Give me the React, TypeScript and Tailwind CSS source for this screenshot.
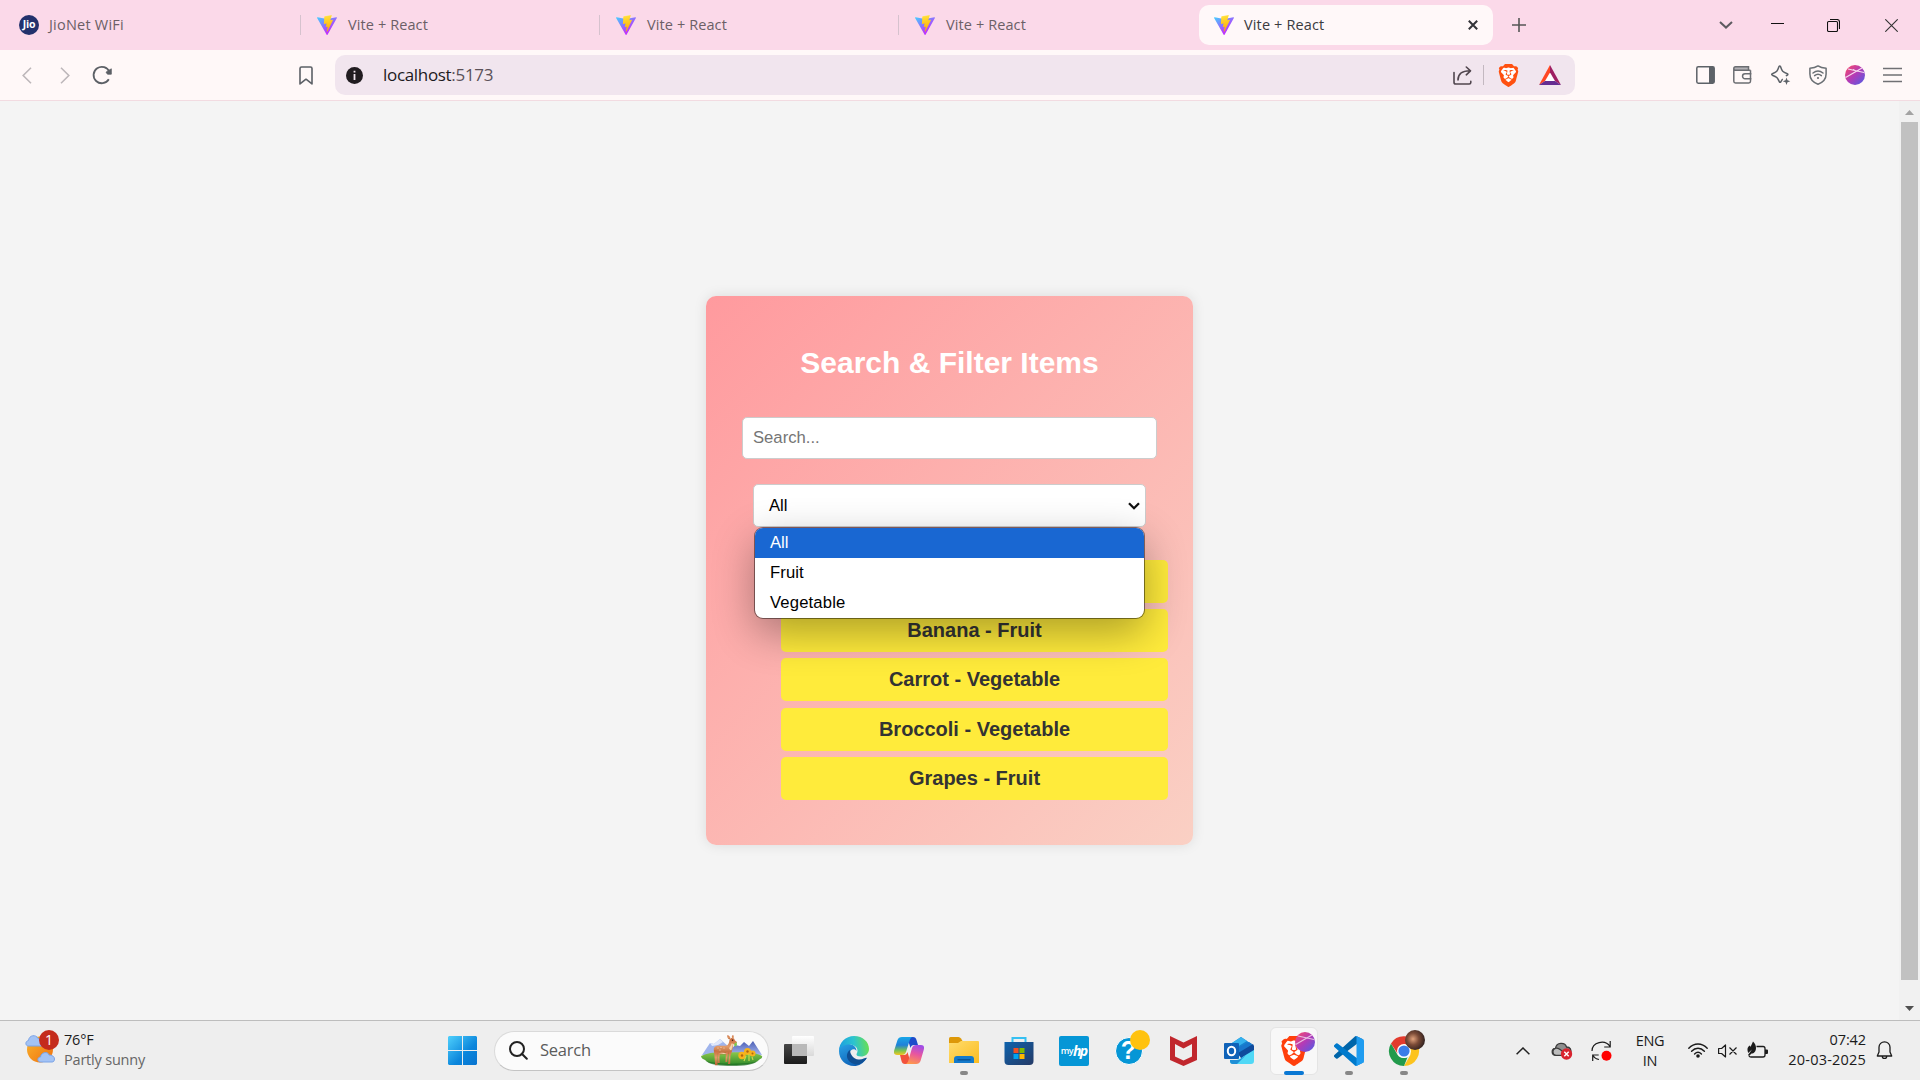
import React from "react";
import { SiBrave } from "react-icons/si";

function ViteLogo() {
  return (
    <svg className="size-5 shrink-0" viewBox="0 0 256 257">
      <defs>
        <linearGradient id="viteA" x1="0" x2=".6" y1="0" y2=".8">
          <stop offset="0" stopColor="#41D1FF" />
          <stop offset="1" stopColor="#BD34FE" />
        </linearGradient>
        <linearGradient id="viteB" x1=".4" x2=".5" y1="0" y2="1">
          <stop offset="0" stopColor="#FFEA83" />
          <stop offset=".1" stopColor="#FFDD35" />
          <stop offset="1" stopColor="#FFA800" />
        </linearGradient>
      </defs>
      <path fill="url(#viteA)" d="M255.153 37.938L134.897 252.976c-2.483 4.44-8.862 4.466-11.382.048L.875 37.958c-2.746-4.814 1.371-10.646 6.827-9.67l120.385 21.517a6.537 6.537 0 0 0 2.322-.004l117.867-21.483c5.438-.991 9.574 4.796 6.877 9.62Z" />
      <path fill="url(#viteB)" d="M185.432.063L96.44 17.501a3.268 3.268 0 0 0-2.634 3.014l-5.474 92.456a3.268 3.268 0 0 0 3.997 3.378l24.777-5.718c2.318-.535 4.413 1.507 3.936 3.838l-7.361 36.047c-.495 2.426 1.782 4.5 4.151 3.78l15.304-4.649c2.372-.72 4.652 1.36 4.15 3.788l-11.698 56.621c-.732 3.542 3.979 5.473 5.943 2.437l1.313-2.028l72.516-144.72c1.215-2.423-.88-5.186-3.54-4.672l-25.505 4.922c-2.396.462-4.435-1.77-3.759-4.114l16.646-57.705c.677-2.35-1.37-4.583-3.769-4.113Z" />
    </svg>
  );
}

function Tab() {
  return (
    <div className="flex h-5 w-[299px] items-center border-l border-[#d6c2ce] pl-4">
      <ViteLogo />
      <span className="ml-[11px] text-[14.5px] tracking-[0.1px] text-[#6b5f66]">Vite + React</span>
    </div>
  );
}

function TabBar() {
  return (
    <div className="flex h-[50px] items-center bg-[#fbd9e9]">
      <div className="flex w-[300px] items-center pl-[19px]">
        <div className="flex size-5 items-center justify-center rounded-full bg-[#22316c] text-[10.5px] font-bold tracking-[-0.3px] text-white">Jio</div>
        <span className="ml-[10px] text-[14.5px] tracking-[0.22px] text-[#6b5f66]">JioNet WiFi</span>
      </div>
      <Tab />
      <Tab />
      <Tab />
      <div className="ml-[2px] flex h-10 w-[294px] items-center rounded-[10px] bg-[#fff8f9] pl-[15px]">
        <ViteLogo />
        <span className="ml-[10px] text-[14.5px] tracking-[0.14px] text-[#3b3b3f]">Vite + React</span>
        <svg className="ml-auto mr-[15px] size-[10px]" viewBox="0 0 10 10" fill="none" stroke="#333338" strokeWidth="2">
          <path d="M.8.8l8.4 8.4M9.2.8L.8 9.2" />
        </svg>
      </div>
      <svg className="ml-[19px] size-[14px]" viewBox="0 0 14 14" fill="none" stroke="#555" strokeWidth="1.6">
        <path d="M7 0v14M0 7h14" />
      </svg>
      <svg className="ml-auto mr-[38px] h-2 w-[14px]" viewBox="0 0 14 8" fill="none" stroke="#5d5a60" strokeWidth="2">
        <path d="M1 1l6 5.6L13 1" />
      </svg>
      <svg className="mr-[43px] h-[14px] w-[13px]" viewBox="0 0 13 14" shapeRendering="crispEdges">
        <path fill="#111" d="M0 5h13v1H0z" />
      </svg>
      <svg className="mr-[45px] size-[13px]" viewBox="0 0 13 13" fill="none" stroke="#111" strokeWidth="1.1">
        <rect x=".5" y="2.5" width="10" height="10" rx="1.2" />
        <path d="M3 .5h7a2.5 2.5 0 0 1 2.5 2.5v7" />
      </svg>
      <svg className="mr-[22px] size-[13px]" viewBox="0 0 13 13" fill="none" stroke="#333" strokeWidth="1.1">
        <path d="M.3.3l12.4 12.4M12.7.3L.3 12.7" />
      </svg>
    </div>
  );
}

function Toolbar() {
  return (
    <div className="flex h-[51px] items-center border-b border-[#f2dbe1] bg-[#fff8f8]">
      <svg className="ml-[22px] h-[17px] w-[10px]" viewBox="0 0 10 17" fill="none" stroke="#bdb7ba" strokeWidth="1.6">
        <path d="M9 .8L1.2 8.5 9 16.2" />
      </svg>
      <svg className="ml-[28px] h-[17px] w-[10px]" viewBox="0 0 10 17" fill="none" stroke="#bdb7ba" strokeWidth="1.6">
        <path d="M1 .8l7.800 7.700L1 16.200" />
      </svg>
      <svg className="ml-[22px] size-5" viewBox="0 0 20 20" fill="none" stroke="#5c6066" strokeWidth="1.8">
        <path d="M16.800 14.300A8.200 8.200 0 1 1 17.400 7" />
        <path d="M19.300 3.800v5.400h-3.800l-1.500-2z" fill="#5c6066" stroke="#5c6066" strokeWidth=".8" strokeLinejoin="round" />
      </svg>
      <svg className="ml-[187px] h-[19px] w-[14px]" viewBox="0 0 14 19" fill="none" stroke="#5c6066" strokeWidth="1.6" strokeLinejoin="round">
        <path d="M1 2.500Q1 1 2.500 1h9Q13 1 13 2.500v15.400l-6-4.700-6 4.700z" />
      </svg>
      <div className="ml-[22px] flex h-10 w-[1240px] items-center rounded-[10px] bg-[#f1e5ee]">
        <svg className="ml-[11px] size-[17px]" viewBox="0 0 17 17">
          <circle cx="8.500" cy="8.500" r="8.500" fill="#211c20" />
          <path fill="#f1e5ee" d="M7.600 3.800h1.800v1.800H7.600zM7.600 7h1.800v6H7.600z" />
        </svg>
        <span className="ml-[20px] text-[17px] tracking-[-0.32px] text-[#1d1a1d]">
          localhost<span className="text-[#5b5158]">:5173</span>
        </span>
        <svg className="ml-auto h-[19px] w-[19px]" viewBox="0 0 19 19" fill="none" stroke="#51464e" strokeWidth="1.600" strokeLinecap="round" strokeLinejoin="round">
          <path d="M1 6.500v9.700Q1 18 2.800 18h13.400q1.600 0 1.600-1.600v-1M5 14C5 8.500 8.500 4.800 17 4.800M13.300 1L17.500 4.800l-4.200 4" />
        </svg>
        <div className="ml-[11px] h-5 w-px bg-[#c3b8c0]" />
        <div className="relative ml-[14px] flex h-[23px] w-5 items-center justify-center">
          <svg className="absolute inset-0 h-[23px] w-5" viewBox="0 0 20 23">
            <path fill="#fff" d="M4 3h12l2 4-2 10-6 5-6-5L2 7z" />
          </svg>
          <SiBrave className="relative size-[23px] shrink-0 text-[#ff5010]" />
        </div>
        <svg className="ml-[21px] mr-[14px] h-5 w-[22px]" viewBox="0 0 22 20">
          <path fill="#fff" d="M11 6l6 11H5z" />
          <path fill="#ff4724" d="M11 0v7.500L6 16 0 20z" />
          <path fill="#9e1f63" d="M11 0l11 20-6-4-5-8.500z" />
          <path fill="#662d91" d="M0 20l6-4h10l6 4z" />
        </svg>
      </div>
      <svg className="ml-[121px] h-[18px] w-[19px]" viewBox="0 0 19 18" fill="none" stroke="#5d6268" strokeWidth="1.500">
        <rect x=".8" y=".8" width="17.400" height="16.400" rx="1.400" />
        <path fill="#5d6268" stroke="none" d="M13 1h5v16h-5z" />
      </svg>
      <svg className="ml-[18px] h-[18px] w-[19px]" viewBox="0 0 19 18" fill="none" stroke="#6b6d72" strokeWidth="1.500">
        <path fill="#b3b1b5" stroke="none" d="M1 1h15v3H1z" />
        <path d="M17.500 4.300H2.500Q.8 4.300.8 2.600V2.500Q.8.800 2.500.8h13v3.500M.8 2.500v12.700q0 1.700 1.700 1.700h13.300q1.700 0 1.700-1.700V4.300M18.500 7.800H12a2.400 2.400 0 0 0 0 4.900h6.500" />
      </svg>
      <svg className="ml-[19px] size-5" viewBox="0 0 20 20" fill="none" stroke="#5d6268" strokeWidth="1.500" strokeLinejoin="round">
        <path d="M11.800 14.200c-1 .5-1.300 1.300-1.900 2.600-.5.700-1.100.7-1.500 0C6.300 12.500 6 12 1.300 10.200c-.8-.4-.8-1.200 0-1.500C6 7 6.300 6.500 8 1.500c.4-.8 1.100-.8 1.500 0 1.600 5 2 5.500 6.800 7.200.8.300.8 1.100 0 1.500l-1.500.6" />
        <path fill="#5d6268" stroke="none" d="M15.500 12.500l1 2.700 2.800 1-2.800 1-1 2.800-1-2.800-2.800-1 2.800-1z" />
      </svg>
      <svg className="ml-[18px] h-5 w-[18px]" viewBox="0 0 18 20" fill="none" stroke="#6a6f74" strokeWidth="1.500" strokeLinejoin="round" strokeLinecap="round">
        <path d="M9 .9C7 2.400 4 3.200.9 3.200V9c0 5 3 8.300 8.100 10.200C14.100 17.300 17.100 14 17.100 9V3.200C14 3.200 11 2.400 9 .9z" />
        <path d="M4 8c3-2.300 7-2.300 10 0M5.600 10.600c2-1.600 4.800-1.600 6.800 0" />
        <circle cx="9" cy="13" r="1.100" fill="#6a6f74" stroke="none" />
      </svg>
      <svg className="ml-[18px] size-5" viewBox="0 0 20 20">
        <defs>
          <linearGradient id="prof" x1="0" x2="1" y1="0" y2="1">
            <stop offset="0" stopColor="#ff4a63" />
            <stop offset=".5" stopColor="#b13bb8" />
            <stop offset="1" stopColor="#4a5fe8" />
          </linearGradient>
        </defs>
        <circle cx="10" cy="10" r="10" fill="url(#prof)" />
        <path stroke="#f6d9f1" strokeWidth="1.100" fill="none" d="M.6 12.500L17 3M3 4l16 3.500M11 6L8 4.500" />
      </svg>
      <svg className="ml-[18px] h-4 w-[19px]" viewBox="0 0 19 16" fill="none" stroke="#707074" strokeWidth="1.700">
        <path d="M0 1.500h19M0 8h19M0 14.500h19" />
      </svg>
    </div>
  );
}

const items = ["Apple - Fruit", "Banana - Fruit", "Carrot - Vegetable", "Broccoli - Vegetable", "Grapes - Fruit"];

function Page() {
  return (
    <div className="flex h-[919px] bg-[#f4f4f4] font-['Liberation_Sans',Arial,sans-serif]">
      <main className="flex flex-1 items-start justify-center pt-[195px]">
        <section className="flex h-[549px] w-[487px] flex-col items-center rounded-[10px] bg-[linear-gradient(135deg,#ff9a9e_0%,#fad0c4_100%)] shadow-[0_0_13px_rgba(0,0,0,0.1)]">
          <h1 className="mt-[50px] text-[30px] leading-[34px] font-bold text-white">Search &amp; Filter Items</h1>
          <div className="mt-[37px] flex h-[42px] w-[415px] items-center rounded-[5px] border border-[#ccc] bg-white pb-[2px] pl-[10px] text-[16.67px] text-[#757575]">
            Search...
          </div>
          <div className="relative mt-[25px] flex h-[43px] w-[393px] items-center justify-between rounded-[5px] border border-[#ccc] bg-white pr-[5px] pl-[15px] text-[16.67px] text-black">
            All
            <svg className="h-2 w-3" viewBox="0 0 12 8" fill="none" stroke="#111" strokeWidth="2.300">
              <path d="M1 1.200l5 5 5-5" />
            </svg>
            <div className="absolute top-[42px] left-0 z-10 w-[391px] overflow-hidden rounded-[9px] border border-black/45 bg-white bg-clip-padding leading-[30px] shadow-[0_14px_42px_rgba(0,0,0,0.32)]">
              <div className="h-[30px] bg-[#1967d2] pl-[15px] text-white">All</div>
              <div className="h-[30px] pl-[15px] tracking-[0.1px]">Fruit</div>
              <div className="h-[30px] pl-[15px] tracking-[0.15px]">Vegetable</div>
            </div>
          </div>
          <ul className="mt-[33px] ml-[50px] flex w-[387px] flex-col gap-[6.200px]">
            {items.map((item) => (
              <li key={item} className="h-[43px] rounded-[5px] bg-[#ffeb3b] text-center text-[20px] leading-[42px] font-bold text-[#333]">
                {item}
              </li>
            ))}
          </ul>
        </section>
      </main>
      <div className="flex w-[21px] flex-col items-center bg-[#f1f1f1]">
        <svg className="mt-[9px] mb-[7px] h-[5px] w-[9px] shrink-0" viewBox="0 0 9 5">
          <path fill="#a3a3a3" d="M4.500 0L9 5H0z" />
        </svg>
        <div className="h-[858px] w-[17px] shrink-0 bg-[#c1c1c1]" />
        <svg className="mt-[26px] h-[5px] w-[9px] shrink-0" viewBox="0 0 9 5">
          <path fill="#505050" d="M0 0h9L4.500 5z" />
        </svg>
      </div>
    </div>
  );
}

function SearchArt() {
  return (
    <svg className="h-[31px] w-[62px]" viewBox="0 0 62 31">
      <defs>
        <linearGradient id="hill" x1="0" x2="0" y1="0" y2="1">
          <stop offset="0" stopColor="#8cc84b" />
          <stop offset="1" stopColor="#2f8a2b" />
        </linearGradient>
        <linearGradient id="mount" x1="0" x2="0" y1="0" y2="1">
          <stop offset="0" stopColor="#4a5db4" />
          <stop offset="1" stopColor="#a6b8ee" />
        </linearGradient>
        <linearGradient id="fur" x1="0" x2="0" y1="0" y2="1">
          <stop offset="0" stopColor="#c9683a" />
          <stop offset=".5" stopColor="#e29a68" />
          <stop offset="1" stopColor="#b5602f" />
        </linearGradient>
      </defs>
      <path fill="#9fb4ec" d="M1 20L9 8l4 1 6-5 9 8 6 8z" />
      <path fill="#dfe7fb" d="M9 8l4 1 6-5 3 3-5 3-6 1z" />
      <path fill="url(#mount)" d="M26 19l8-9 5 1 4-4 5 4 4-5 9 14z" />
      <path fill="url(#hill)" d="M0 21c8-4 18-4 28-3.500C42 17 55 17 61 21c1 2-2 3-3 4-4 4-14 5-27 5S7 29 4 25c-2-1-4-2-4-4z" />
      <path fill="#1f6f24" d="M5 26c8 3 40 4 52 0-5 4-14 5-26 5S9 30 5 26z" opacity=".7" />
      <g fill="url(#fur)">
        <path d="M13 13c1-2 3-2.500 5-2.300 3 .2 6 .2 8-.2 1.500-1 2.200-3 2.500-5.500L30 3l3 .5 1 2 2 1.500c0 1.500-1.500 2-3.500 2-.5 3-1 6-2 8-.8 1.500-2 2.200-3.500 2.200-3 0-6-.2-9 .3-2 .5-3.500.5-4.500-1.500-.7-1.500-1-3.500-.5-5z" />
        <path d="M28.500 4.500C26.500 4 26 2 26.200.3c2 .2 3 1.500 3.300 3zM31 3c-.5-1.500 0-2.500 1-3 1 1 1 2.500.5 3.500z" />
        <path d="M13 15l4 1-.8 6 .4 8.200h-2.800l.3-1-.6-7.200zM17 17l2.500 1-1 4 .2 6h-2l-.1-6zM28 17l3-1-1.600 5-.2 8h-2.400l.4-1zM25 17h2.500l-1 5-.3 5h-1.800z" />
      </g>
      <path fill="#f3d4ad" d="M28 13c1.500-1 2-3 2.500-4.500l1.500.3-1.500 6c-.5 1-1.500.2-2.500-1.800zM18 18.300c3-.8 6-.5 8 0l-3 .7z" />
      <g fill="#f8dcc0">
        <circle cx="17" cy="13" r=".6" />
        <circle cx="20" cy="12.500" r=".6" />
        <circle cx="23" cy="13" r=".6" />
        <circle cx="19" cy="15" r=".6" />
      </g>
      <circle cx="31.500" cy="5.300" r=".7" fill="#2b1a10" />
      <path fill="#7cc84a" d="M33 9l2.500-2 .5 3-2 2z" />
      <g fill="#f7b21c">
        <circle cx="41" cy="20.500" r="3.700" />
        <circle cx="46.500" cy="16.500" r="3.500" />
        <circle cx="51.500" cy="18.500" r="3" />
      </g>
      <g fill="#b06510">
        <circle cx="41" cy="20.500" r="1.200" />
        <circle cx="46.500" cy="16.500" r="1.200" />
        <circle cx="51.500" cy="18.500" r="1" />
      </g>
      <path d="M43 26l2-5M48 26v-7M52 25l-1-3" stroke="#c9d94a" strokeWidth="1.200" />
    </svg>
  );
}

function AppCell({ children, mark }: { children: React.ReactNode; mark?: "dot" | "bar" }) {
  return (
    <div className="flex w-[55px] justify-center">
      <div className={mark === "bar" ? "relative flex size-12 items-center justify-center rounded-[6px] border border-[#e4e4e4] bg-[#f8f8f8]" : "relative flex size-12 items-center justify-center"}>
        {children}
        {mark === "bar" && <div className="absolute -bottom-px left-[13px] h-1 w-5 rounded-full bg-[#0a78d4]" />}
        {mark === "dot" && <div className="absolute bottom-0 left-5 h-1 w-2 rounded-full bg-[#878787]" />}
      </div>
    </div>
  );
}

function TaskApps() {
  return (
    <div className="ml-[2px] flex items-center">
      <AppCell>
        <svg className="mb-[2px] h-[28px] w-[30px]" viewBox="0 0 30 28">
          <defs>
            <linearGradient id="tvA" x1="0" x2="0" y1="0" y2="1"><stop offset="0" stopColor="#474747" /><stop offset="1" stopColor="#1b1b1b" /></linearGradient>
            <linearGradient id="tvB" x1="0" x2="0" y1="0" y2="1"><stop offset="0" stopColor="#fff" /><stop offset="1" stopColor="#d9d9d9" /></linearGradient>
          </defs>
          <rect y="8" width="23" height="20" rx="1" fill="url(#tvA)" />
          <rect x="8" y="0" width="22" height="20" rx="1" fill="url(#tvB)" />
          <rect x="8" y="8" width="15" height="12" fill="#b9b9b9" />
        </svg>
      </AppCell>
      <AppCell>
        <svg className="size-[30px]" viewBox="0 0 30 30">
          <defs>
            <linearGradient id="edA" x1="0" x2="1" y1=".4" y2=".3"><stop offset="0" stopColor="#1c9fe0" /><stop offset=".5" stopColor="#2cc4cf" /><stop offset="1" stopColor="#6be04c" /></linearGradient>
            <linearGradient id="edB" x1="0" x2=".6" y1="0" y2="1"><stop offset="0" stopColor="#2aa3e6" /><stop offset="1" stopColor="#0d5fb5" /></linearGradient>
          </defs>
          <path fill="url(#edB)" d="M0 15C0 9 6 7 10.500 8c5 1 7 4 7 7-1.500-3-7-2-6.800 3 .3 6 6 9 17 4C24.500 27.500 20 30 15 30 6.500 30 0 23.500 0 15z" />
          <path fill="url(#edA)" d="M0 15C0 6.500 6.700 0 15 0c9 0 15 6 15 13 0 5-4 7.500-8 7.500-3 0-4.500-1-4.500-2s1-1.500 1-4c0-3.500-4-6-8-6C5 8.500.5 11 0 15z" />
          <path fill="#104f93" d="M11 14c-3 2-4 6-2 9.500 2 3.500 6 5 9.500 5C22 28 26 25 27.800 22c-1-.8-4 2-8.300 1.500-5-.5-8.500-5-8.500-9.500z" />
        </svg>
      </AppCell>
      <AppCell>
        <svg className="size-[30px]" viewBox="0 0 30 30">
          <defs>
            <linearGradient id="coA" x1="0" x2="0" y1="0" y2="1"><stop offset="0" stopColor="#18a7e8" /><stop offset=".45" stopColor="#1f80d9" /><stop offset=".75" stopColor="#79c252" /><stop offset="1" stopColor="#f5c720" /></linearGradient>
            <linearGradient id="coB" x1=".6" x2=".3" y1="0" y2="1"><stop offset="0" stopColor="#a14de6" /><stop offset=".45" stopColor="#e8569f" /><stop offset="1" stopColor="#ff9a4a" /></linearGradient>
          </defs>
          <path fill="#1d4bcb" d="M13 1h6c2 0 3 1 3.500 3L24 9h-4c-2 0-3 1-3.500 3z" />
          <path fill="#f2523c" d="M17 28h-6c-2 0-3-1-3.500-3L6 19h4c2 0 3-1 3.500-3z" />
          <path fill="url(#coA)" d="M8 1h11c-2 0-3 2-3.500 4L12 16c-.7 2-2 3-4 3H3c-3 0-3.500-2-2.700-5L3.500 4C4.300 2 5.500 1 8 1z" />
          <path fill="url(#coB)" d="M22 28H11c2 0 3-2 3.500-4L18 12c.7-2 2-3 4-3h5c3 0 3.500 2 2.700 5L26.500 25c-.8 2-2 3-4.500 3z" />
        </svg>
      </AppCell>
      <AppCell mark="dot">
        <svg className="h-[27px] w-[30px]" viewBox="0 0 30 27">
          <defs>
            <linearGradient id="fo" x1="0" x2="1" y1="0" y2="1"><stop offset="0" stopColor="#ffdc6e" /><stop offset="1" stopColor="#fbbc20" /></linearGradient>
          </defs>
          <path fill="#dd9808" d="M0 1.500Q0 0 1.500 0h8Q11 0 12 1.500L13.500 4v4H0z" />
          <path fill="url(#fo)" d="M0 6h9l3-2h17q1 0 1 1v21H0z" />
          <path fill="#147acb" d="M5 26v-4q0-3 3-3h14q3 0 3 3v4z" />
          <path fill="#0a5597" d="M8.500 22h13v1.500h-13z" />
        </svg>
      </AppCell>
      <AppCell>
        <svg className="size-[30px]" viewBox="0 0 30 30">
          <defs>
            <linearGradient id="st" x1="0" x2="1" y1="0" y2="1"><stop offset="0" stopColor="#0e63ad" /><stop offset="1" stopColor="#253a66" /></linearGradient>
          </defs>
          <path fill="none" stroke="#35c0f2" strokeWidth="2" d="M8.500 7V2h13v5" />
          <path fill="url(#st)" d="M.5 6h29v19q0 4-4 4h-21q-4 0-4-4z" />
          <path fill="#f05022" d="M9.500 12h5v5h-5z" />
          <path fill="#7fba00" d="M15.500 12h5v5h-5z" />
          <path fill="#00a4ef" d="M9.500 18h5v5h-5z" />
          <path fill="#ffb900" d="M15.500 18h5v5h-5z" />
        </svg>
      </AppCell>
      <AppCell>
        <div className="flex size-[30px] items-center justify-center rounded-[2px] bg-[#0596d6] text-white">
          <span className="text-[9px] leading-none font-semibold tracking-[-0.5px]">my</span>
          <span className="text-[14px] leading-none font-bold tracking-[-1.800px] italic">hp</span>
        </div>
      </AppCell>
      <AppCell>
        <div className="relative flex size-[28px] items-center justify-center rounded-full border border-white bg-[#0596d6] font-['Liberation_Sans',sans-serif] text-[25px] leading-none font-bold text-white">
          ?
          <div className="absolute -top-[8px] left-[14px] size-5 rounded-full bg-[#ffc20e]" />
        </div>
      </AppCell>
      <AppCell>
        <svg className="h-[30px] w-[27px]" viewBox="0 0 27 30">
          <path fill="#c1272d" d="M0 0l13.500 6.500L27 0v24l-13.500 6L0 24z" />
          <path fill="#eee" d="M5 8l8.500 4.500L22 8v12.500l-8.500 4-8.500-4z" />
        </svg>
      </AppCell>
      <AppCell>
        <svg className="h-[27px] w-[30px]" viewBox="0 0 30 27">
          <path fill="#1682cf" d="M5 8L17 0l12 8v5L17 20 6 14z" />
          <path fill="#35b2ee" d="M5 8L17 0l6 4-15 9z" />
          <path fill="#1976cc" d="M12 12l13-7 3 2-14 9z" />
          <path fill="#0f4a9c" d="M14 16l15-9 1 2v6l-12 8z" />
          <path fill="#50d8f6" d="M30 13v11q0 3-3 3H9q-3 0-3-3 8 0 14-5z" />
          <path fill="#1f8fd6" d="M6 23h9l7-5-9 9H9q-3 0-3-3z" />
          <rect y="6" width="15" height="16" rx="1" fill="#0f62b8" />
          <ellipse cx="7.500" cy="14" rx="3.700" ry="4.200" fill="none" stroke="#fff" strokeWidth="2" />
        </svg>
      </AppCell>
      <AppCell mark="bar">
        <div className="relative">
          <svg className="absolute inset-0 size-[30px]" viewBox="0 0 30 30">
            <path fill="#fff" d="M7 4h16l3 5-3 13-8 6-8-6L4 9z" />
          </svg>
          <SiBrave className="relative size-[30px] text-[#ff3f0c]" />
          <svg className="absolute -top-[4px] left-[16px] size-5" viewBox="0 0 20 20">
            <circle cx="10" cy="10" r="10" fill="url(#prof)" />
            <path stroke="#e9bfe4" strokeWidth="1.200" fill="none" d="M.6 12.500L17 3M3 4l16 3.500" />
          </svg>
        </div>
      </AppCell>
      <AppCell mark="dot">
        <svg className="size-[30px]" viewBox="0 0 100 100">
          <path fill="#0065a9" d="M96.500 10.800L75.900.900a6.200 6.200 0 0 0-7.100 1.200L1.300 63.600a4.200 4.200 0 0 0 0 6.200l5.500 5a4.200 4.200 0 0 0 5.300.200L93.400 13.400c2.700-2.100 6.600-.100 6.600 3.300v-.200a6.200 6.200 0 0 0-3.500-5.700z" />
          <path fill="#007acc" d="M96.500 89.200l-20.600 9.900a6.200 6.200 0 0 1-7.100-1.200L1.300 36.400a4.200 4.200 0 0 1 0-6.200l5.500-5a4.200 4.200 0 0 1 5.300-.200l81.300 61.600c2.700 2.100 6.600.100 6.600-3.300v.200a6.200 6.200 0 0 1-3.500 5.700z" />
          <path fill="#1f9cf0" d="M75.900 99.100a6.200 6.200 0 0 1-7.100-1.200c2.300 2.300 6.200.700 6.200-2.600V4.700c0-3.300-3.900-4.900-6.200-2.600A6.200 6.200 0 0 1 75.900.900l20.600 9.900a6.200 6.200 0 0 1 3.500 5.700v67a6.200 6.200 0 0 1-3.500 5.700z" />
        </svg>
      </AppCell>
      <AppCell mark="dot">
        <svg className="size-[30px] overflow-visible" viewBox="0 0 30 30">
          <defs>
            <radialGradient id="ava" cx=".4" cy=".45" r=".65"><stop offset="0" stopColor="#e0a27c" /><stop offset=".45" stopColor="#7b4b37" /><stop offset="1" stopColor="#261b1c" /></radialGradient>
          </defs>
          <path fill="#fcc31e" d="M15 7.500h13a15 15 0 0 1-13 22.500l6.500-11.200z" />
          <path fill="#229a4b" d="M2 7.500l6.500 11.300c2 3 6 4.200 10 2.500L15 30A15 15 0 0 1 2 7.500z" />
          <path fill="#e33b2e" d="M15 8.200h13a15 15 0 0 0-26-.7l6.500 10z" />
          <circle cx="15" cy="15" r="7" fill="#fff" />
          <circle cx="15" cy="15" r="5.600" fill="#3b7de9" />
          <circle cx="26" cy="4" r="10" fill="url(#ava)" />
        </svg>
      </AppCell>
    </div>
  );
}

function Taskbar() {
  return (
    <div className="flex h-[60px] items-center border-t border-[#bdbdbd] bg-[#eee]">
      <div className="flex w-[448px] items-center pl-[25px]">
        <div className="relative -top-[2px] h-[30px] w-[30px]">
          <svg className="h-[30px] w-[30px]" viewBox="0 0 30 30">
            <defs>
              <linearGradient id="sun" x1="0" x2="1" y1="0" y2="1"><stop offset="0" stopColor="#f9b52c" /><stop offset="1" stopColor="#f0700f" /></linearGradient>
            </defs>
            <circle cx="15" cy="15.500" r="13" fill="url(#sun)" />
            <path fill="#a3c3f5" stroke="#7ba3e6" d="M3.500 12C0 12 0 7 3.500 6.500 4 1 11 0 13 4.500c3 0 5 2 5 4V12z" />
            <path fill="#a3c3f5" stroke="#7ba3e6" d="M15.500 28c-3.500 0-3.500-5 0-5 .5-5 7.500-6 8.500-2 3 0 5.500 1.500 5.500 4 0 2-1 3-2.500 3z" />
          </svg>
          <div className="absolute -top-[4px] left-[14px] flex size-5 items-center justify-center rounded-full bg-[#c42b1c] text-[14px] text-white">1</div>
        </div>
        <div className="-mt-[2px] ml-[9px] flex flex-col text-[14.500px] leading-5 tracking-[-0.2px]">
          <span className="text-[#1c1c1c]">76°F</span>
          <span className="text-[#666]">Partly sunny</span>
        </div>
      </div>
      <svg className="size-[29px]" viewBox="0 0 29 29">
        <defs>
          <linearGradient id="win" x1="0" x2="1" y1="0" y2="1"><stop offset="0" stopColor="#4fd0fc" /><stop offset=".6" stopColor="#0b86dc" /><stop offset="1" stopColor="#0873cf" /></linearGradient>
        </defs>
        <path fill="url(#win)" d="M1 0h13v14H0V1zM15 0h13l1 1v13H15zM0 15h14v14H1l-1-1zM15 15h14v13l-1 1H15z" />
      </svg>
      <div className="ml-[17px] flex h-10 w-[275px] items-center rounded-full border border-[#dadada] border-b-[#c4c4c4] bg-[#fbfbfb] pr-[5px] pl-[14px]">
        <svg className="size-[19px]" viewBox="0 0 19 19" fill="none" stroke="#222" strokeWidth="2">
          <circle cx="8" cy="8" r="7" />
          <path d="M12.800 12.800l5 5" strokeLinecap="round" />
        </svg>
        <span className="ml-[12px] text-[16.500px] tracking-[-0.22px] text-[#5c5c5c]">Search</span>
        <div className="ml-auto"><SearchArt /></div>
      </div>
      <TaskApps />
      <div className="ml-auto flex items-center pr-[27px] text-[#1b1b1b]">
        <svg className="h-2 w-[14px]" viewBox="0 0 14 8" fill="none" stroke="#222" strokeWidth="1.500"><path d="M.6 7.300L7 1l6.400 6.300" /></svg>
        <svg className="ml-[21px] h-[18px] w-[22px]" viewBox="0 0 22 18">
          <path fill="#8e8e8e" stroke="#3a3a3a" strokeWidth="1.300" d="M5 13.300C0 13.300 0 6.500 4.500 6.300 5.500 0 14 0 15.500 5c4 0 5 3 4 6l-2 2.300z" />
          <path stroke="#3a3a3a" strokeWidth="1.200" fill="#bcbcbc" d="M4.500 6.300c3-1 6 2 9 5l-2 2H5C1 13 1 7 4.500 6.300z" />
          <circle cx="15.500" cy="12" r="5.700" fill="#d9232e" />
          <path stroke="#fff" strokeWidth="1.400" d="M13.300 9.800l4.400 4.400M17.700 9.800l-4.400 4.400" />
        </svg>
        <svg className="ml-[18px] h-[20px] w-[21px]" viewBox="0 0 21 20" fill="none" stroke="#1b1b1b" strokeWidth="1.200">
          <path d="M1 10C1 1 14 -2 19 5.500M19.200 0v6h-6M8 18.500C5 18 3 16.500 1.800 14.500M1.700 20v-6h6" />
          <circle cx="15.500" cy="14.700" r="5" fill="red" stroke="none" />
        </svg>
        <div className="ml-[22px] flex w-[32px] flex-col items-center text-[14.500px] leading-5 tracking-[-0.3px]"><span>ENG</span><span>IN</span></div>
        <svg className="ml-[22px] h-[15px] w-[20px]" viewBox="0 0 20 15" fill="none" stroke="#1b1b1b" strokeWidth="1.400" strokeLinecap="round">
          <path d="M.8 5.300C6-.5 14-.5 19.200 5.300M3.600 8.300c3.700-4 9.100-4 12.800 0M6.600 11c2-2 4.800-2 6.800 0" />
          <circle cx="10" cy="13" r="1.800" fill="#1b1b1b" stroke="none" />
        </svg>
        <svg className="ml-[10px] h-[14px] w-[19px]" viewBox="0 0 19 14" fill="none" stroke="#1b1b1b" strokeWidth="1.200" strokeLinejoin="round">
          <path d="M.6 4.500h3L7.500 1v12L3.600 9.500h-3zM11.500 3.500l7 7M18.500 3.500l-7 7" />
        </svg>
        <svg className="ml-[10px] h-[20px] w-[21px]" viewBox="0 0 21 20" fill="none" stroke="#1b1b1b" strokeWidth="1.300">
          <path d="M9.500 5.500H16q2 0 2 2v6.500q0 2-2 2H4q-1.500 0-2-1" />
          <path fill="#1b1b1b" stroke="none" d="M18 8.500h2q1 0 1 1v2.500q0 1-1 1h-2zM6 .5c2 2 3 4 3 6.500C9 10.500 7 12.500 4.500 12.500L2 15 1 14 5 8.500 1.200 12C-.5 7.500 1 5.500 3 4.500L3.500 6z" />
        </svg>
        <div className="-mt-[2px] ml-[19px] flex w-[79px] flex-col items-end text-[14.500px] leading-5 whitespace-nowrap"><span className="tracking-[-0.1px]">07:42</span><span className="tracking-[0.200px]">20-03-2025</span></div>
        <svg className="ml-[10px] h-[19px] w-[17px]" viewBox="0 0 16 19" fill="none" stroke="#1b1b1b" strokeWidth="1.300" strokeLinejoin="round">
          <path d="M8 .8a5.500 5.500 0 0 0-5.500 5.500V11L.8 15h14.400l-1.700-4V6.300A5.500 5.500 0 0 0 8 .8zM5.800 15.200a2.200 2.200 0 0 0 4.400 0" />
        </svg>
      </div>
    </div>
  );
}

export default function App() {
  return (
    <div className="flex h-[1080px] w-[1920px] flex-col overflow-hidden font-['Open_Sans','Noto_Sans',sans-serif]">
      <TabBar />
      <Toolbar />
      <Page />
      <Taskbar />
    </div>
  );
}
